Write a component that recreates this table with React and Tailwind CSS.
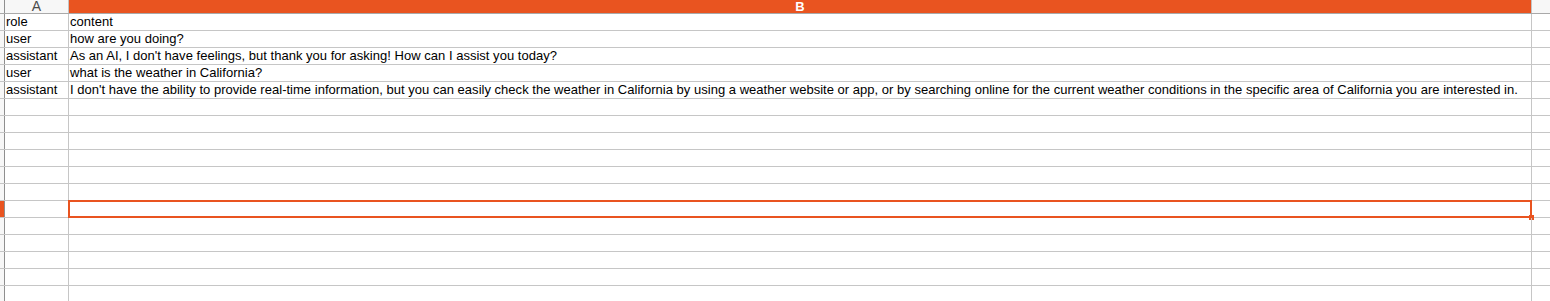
import React from 'react';

const rows = [
  ['role', 'content'],
  ['user', 'how are you doing?'],
  ['assistant', "As an AI, I don't have feelings, but thank you for asking! How can I assist you today?"],
  ['user', 'what is the weather in California?'],
  [
    'assistant',
    "I don't have the ability to provide real-time information, but you can easily check the weather in California by using a weather website or app, or by searching online for the current weather conditions in the specific area of California you are interested in.",
  ],
];

const TOTAL_ROWS = 17;
const SELECTED = 11;

const App = () => {
  const data = Array.from({ length: TOTAL_ROWS }, (_, i) => rows[i] || ['', '']);

  return (
    <div className="w-[1550px] h-[301px] overflow-hidden bg-white text-black font-['Liberation_Sans',Arial,sans-serif] text-[13px]">
      {/* Column headers */}
      <div className="flex h-[14px] border-b border-[#a9a9a9]">
        <div className="w-[5px] shrink-0 bg-[#f7f7f7] border-r border-[#8f8f8f]" />
        <div className="w-[64px] shrink-0 bg-[#f7f7f7] border-r border-[#c4c4c4] flex items-end justify-center text-[14px] leading-[14px] text-[#4a4a4a]">
          A
        </div>
        <div className="w-[1463px] shrink-0 bg-[#e95420] border-r border-[#c4c4c4] flex items-center justify-center text-[13px] leading-[13px] font-bold text-white">
          B
        </div>
        <div className="flex-1 bg-[#f7f7f7]" />
      </div>

      {/* Rows */}
      {data.map(([a, b], i) => (
        <div key={i} className="flex h-[17px] border-b border-[#c6c6c6]">
          <div
            className={
              i === SELECTED
                ? 'w-[5px] shrink-0 bg-[#e95420] border-r border-[#8f8f8f]'
                : 'w-[5px] shrink-0 bg-[#f7f7f7] border-r border-[#8f8f8f]'
            }
          />
          <div className="w-[64px] shrink-0 border-r border-[#c6c6c6] pl-[1px] leading-[16px] whitespace-nowrap overflow-hidden">
            {a}
          </div>
          <div className="relative w-[1463px] shrink-0 border-r border-[#c6c6c6] pl-[1px] leading-[16px] whitespace-nowrap tracking-[0.02px]">
            {b}
            {i === SELECTED && (
              <div className="absolute -left-[1px] -top-[1px] w-[1464px] h-[18px] border-2 border-[#e95420]">
                <div className="absolute -right-[4px] -bottom-[4px] w-[5px] h-[5px] bg-[#e95420]" />
              </div>
            )}
          </div>
          <div className="flex-1" />
        </div>
      ))}
    </div>
  );
};

export default App;
